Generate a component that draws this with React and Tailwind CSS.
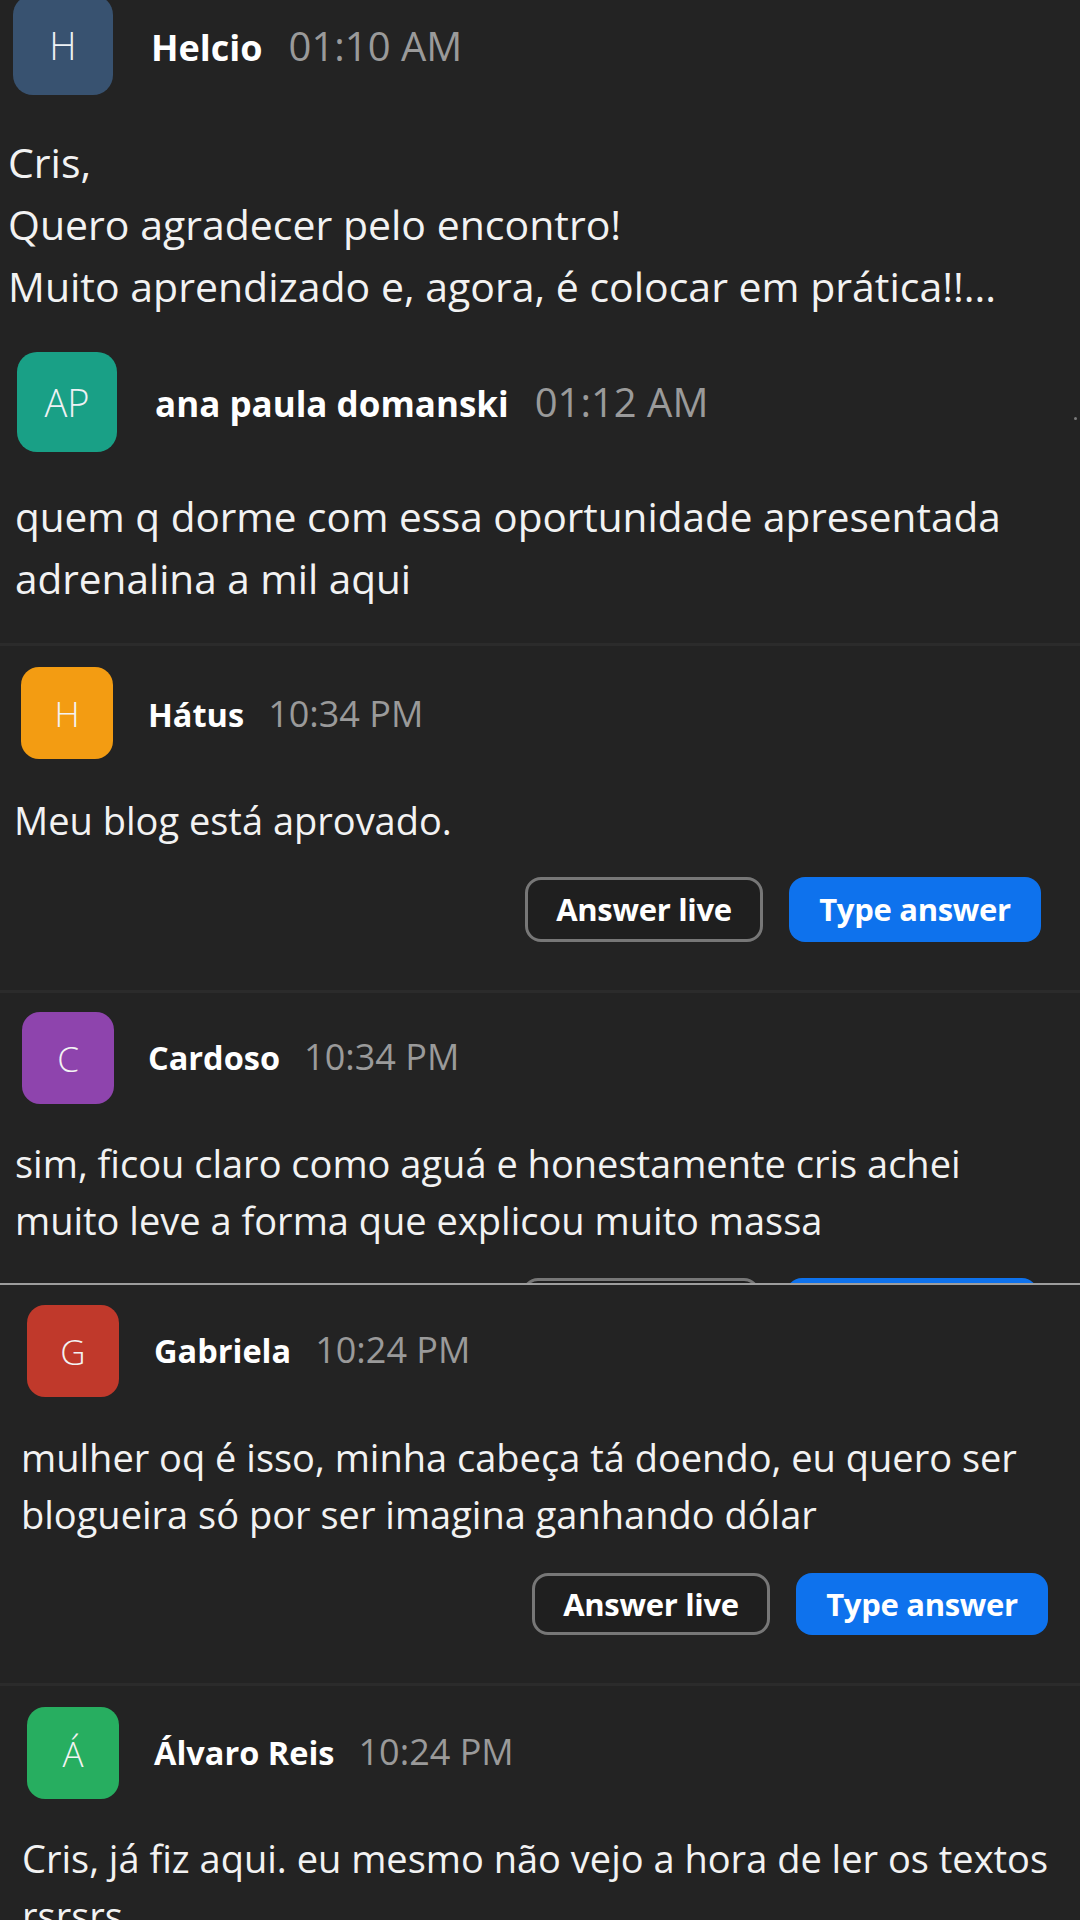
import React from "react";

function Header({ avatarCls, letter, letterCls, name, time, nameCls, timeCls, boxCls, dot }) {
  return (
    <div className="flex items-start">
      <div className={`flex shrink-0 items-center justify-center ${avatarCls}`}>
        <span className={letterCls}>{letter}</span>
      </div>
      <div className={`flex items-baseline ${boxCls}`}>
        <span className={nameCls}>{name}</span>
        <span className={timeCls}>{time}</span>
      </div>
      {dot && <div className="ml-auto mr-[3px] mt-[65px] h-[3px] w-[3px] rounded-full bg-[#7a7a7a]" />}
    </div>
  );
}

function Msg({ lines, cls }) {
  return (
    <div className={cls}>
      {lines.map((l, i) => (
        <div key={i} className="whitespace-nowrap">
          {l}
        </div>
      ))}
    </div>
  );
}

function Buttons({ cls, hCls }) {
  return (
    <div className={`flex justify-end gap-[26px] ${cls}`}>
      <div className={`flex w-[238px] items-center justify-center rounded-[16px] border-[3px] border-[#777777] bg-[#1f1f1f] text-[31px] font-bold leading-none tracking-[-0.3px] text-white ${hCls}`}>
        Answer live
      </div>
      <div className={`flex w-[252px] items-center justify-center rounded-[16px] bg-[#0e72ed] text-[31px] font-bold leading-none tracking-[-0.3px] text-white ${hCls}`}>
        Type answer
      </div>
    </div>
  );
}

const bigName = "text-[36px] leading-none font-bold text-white";
const bigTime = "ml-[26px] text-[40px] leading-none text-[#9a9a9a]";
const smallName = "text-[32.5px] leading-none font-bold text-white";
const smallTime = "ml-[24px] text-[36px] leading-none text-[#9a9a9a]";
const bigLetter = "text-[38px] leading-none font-light text-[#eef1f4]";
const smallLetter = "text-[35px] leading-none font-light text-[#f3f3f3]";

export default function App() {
  return (
    <div className="h-[1920px] w-[1080px] overflow-hidden bg-[#232323] font-['Open_Sans','Noto_Sans',sans-serif] text-[#f2f2f2]">
      {/* Helcio */}
      <section>
        <Header
          avatarCls="-mt-[5px] ml-[13px] h-[100px] w-[100px] rounded-[20px] bg-[#385270]"
          letter="H"
          letterCls={bigLetter}
          name="Helcio"
          time="01:10 AM"
          nameCls={bigName}
          timeCls={bigTime}
          boxCls="ml-[38px] mt-[26px]"
        />
        <Msg
          cls="ml-[8px] mt-[36px] text-[41px] leading-[62px]"
          lines={["Cris,", "Quero agradecer pelo encontro!", "Muito aprendizado e, agora, é colocar em prática!!..."]}
        />
      </section>

      {/* ana paula */}
      <section className="pb-[33px] pt-[35px]">
        <Header
          avatarCls="ml-[17px] h-[100px] w-[100px] rounded-[20px] bg-[#19a086]"
          letter="AP"
          letterCls={bigLetter}
          name="ana paula domanski"
          time="01:12 AM"
          nameCls="text-[35px] leading-none font-bold text-white"
          timeCls={bigTime}
          boxCls="ml-[38px] mt-[30px]"
          dot
        />
        <Msg
          cls="ml-[15px] mt-[34px] text-[40.5px] leading-[62px]"
          lines={["quem q dorme com essa oportunidade apresentada", "adrenalina a mil aqui"]}
        />
      </section>

      <div className="h-[3px] bg-[#2b2b2b]" />

      {/* Hátus */}
      <section className="pb-[48px] pt-[21px]">
        <Header
          avatarCls="ml-[21px] h-[92px] w-[92px] rounded-[18px] bg-[#f39c12]"
          letter="H"
          letterCls={smallLetter}
          name="Hátus"
          time="10:34 PM"
          nameCls={smallName}
          timeCls={smallTime}
          boxCls="ml-[35px] mt-[29px]"
        />
        <Msg cls="ml-[14px] mt-[33px] text-[38px] leading-[57px]" lines={["Meu blog está aprovado."]} />
        <Buttons cls="mr-[39px] mt-[28px]" hCls="h-[65px]" />
      </section>

      <div className="h-[3px] bg-[#2b2b2b]" />

      {/* Cardoso */}
      <section className="h-[290px] overflow-hidden pt-[19px]">
        <Header
          avatarCls="ml-[22px] h-[92px] w-[92px] rounded-[18px] bg-[#8e44ad]"
          letter="C"
          letterCls={smallLetter}
          name="Cardoso"
          time="10:34 PM"
          nameCls={smallName}
          timeCls={smallTime}
          boxCls="ml-[34px] mt-[27px]"
        />
        <Msg
          cls="ml-[15px] mt-[31px] text-[38px] leading-[57px]"
          lines={["sim, ficou claro como aguá e honestamente cris achei", "muito leve a forma que explicou muito massa"]}
        />
        <Buttons cls="mr-[42px] mt-[29px]" hCls="h-[65px]" />
      </section>

      <div className="h-[2px] bg-[#9d9d9d]" />

      {/* Gabriela */}
      <section className="pb-[48px] pt-[20px]">
        <Header
          avatarCls="ml-[27px] h-[92px] w-[92px] rounded-[18px] bg-[#c0392b]"
          letter="G"
          letterCls={smallLetter}
          name="Gabriela"
          time="10:24 PM"
          nameCls={smallName}
          timeCls={smallTime}
          boxCls="ml-[35px] mt-[27px]"
        />
        <Msg
          cls="ml-[21px] mt-[32px] text-[38px] leading-[57px]"
          lines={["mulher oq é isso, minha cabeça tá doendo, eu quero ser", "blogueira só por ser imagina ganhando dólar"]}
        />
        <Buttons cls="mr-[32px] mt-[30px]" hCls="h-[62px]" />
      </section>

      <div className="h-[3px] bg-[#2b2b2b]" />

      {/* Álvaro */}
      <section className="pt-[21px]">
        <Header
          avatarCls="ml-[27px] h-[92px] w-[92px] rounded-[18px] bg-[#27ae60]"
          letter="Á"
          letterCls={smallLetter}
          name="Álvaro Reis"
          time="10:24 PM"
          nameCls={smallName}
          timeCls={smallTime}
          boxCls="ml-[35px] mt-[27px]"
        />
        <Msg
          cls="ml-[22px] mt-[31px] text-[38px] leading-[57px]"
          lines={["Cris, já fiz aqui. eu mesmo não vejo a hora de ler os textos", "rsrsrs"]}
        />
      </section>
    </div>
  );
}
